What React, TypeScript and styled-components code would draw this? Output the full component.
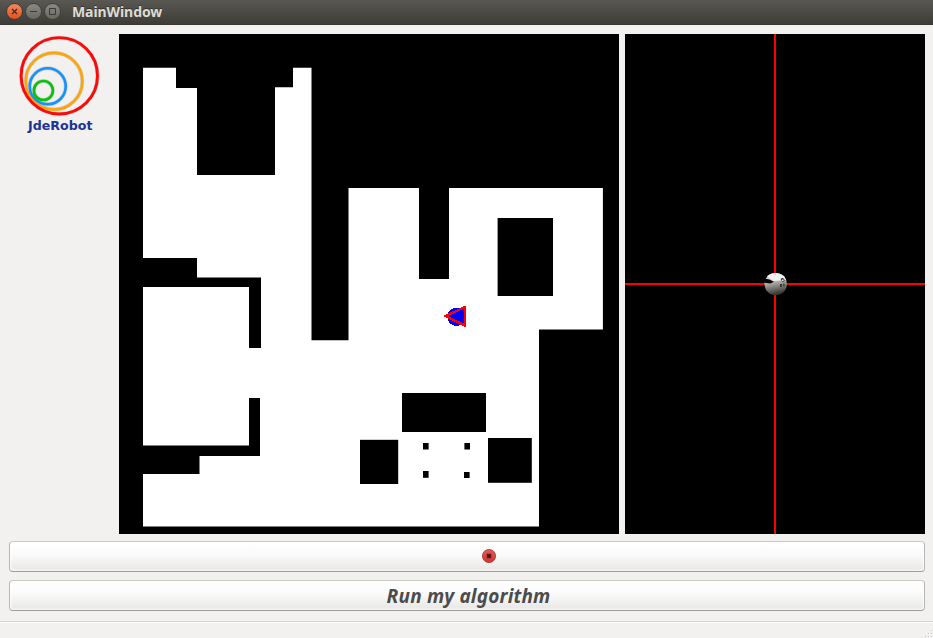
import React from "react";
import styled, { createGlobalStyle } from "styled-components";

const GlobalStyle = createGlobalStyle`
  * { box-sizing: border-box; }
  html, body { margin: 0; padding: 0; overflow: hidden; }
  body { background: #f2f1f0; }
`;

const Window = styled.div`
  display: flex;
  flex-direction: column;
  width: 933px;
  height: 638px;
  background: #f2f1f0;
  overflow: hidden;
`;

const TitleBar = styled.header`
  display: flex;
  align-items: center;
  height: 25px;
  flex: none;
  padding: 0 0 2px 6px;
  gap: 2px;
  background: linear-gradient(#5a5852, #3d3c37 96%, #33322e);
`;

const WindowButton = styled.span<{ $close?: boolean }>`
  display: flex;
  width: 17px;
  height: 17px;
  align-items: center;
  justify-content: center;
  border-radius: 50%;
  border: 1px solid ${(p) => (p.$close ? "#413832" : "#41403b")};
  background: ${(p) =>
    p.$close
      ? "linear-gradient(#f58a60, #e2501f)"
      : "linear-gradient(#8b8982, #6a6862)"};
`;

const Title = styled.h1`
  margin: 0 0 0 9px;
  font: 700 14px/22px "Noto Sans", "Open Sans", sans-serif;
  letter-spacing: -0.08px;
  color: #dfdbd2;
  text-shadow: 0 -1px 0 #35342f;
`;

const Views = styled.main`
  display: flex;
  height: 500px;
  flex: none;
  margin-top: 9px;
`;

const LogoPanel = styled.div`
  width: 119px;
  height: 106px;
`;

const MapView = styled.div`
  width: 500px;
  height: 500px;
  background: #000;
  margin-right: 6px;
`;

const CameraView = styled.div`
  width: 300px;
  height: 500px;
  background: #000;
`;

const Drawing = styled.svg`
  display: block;
`;

const Actions = styled.div`
  display: flex;
  flex-direction: column;
  gap: 8px;
  padding: 7px 8px 0 9px;
`;

const PushButton = styled.button`
  display: flex;
  align-items: center;
  justify-content: center;
  height: 31px;
  width: 100%;
  padding: 0;
  border: 1px solid #b8b6b3;
  border-top-color: #cccac7;
  border-bottom-color: #9e9c9a;
  border-radius: 4px;
  background: linear-gradient(#ffffff, #fafafa 45%, #ebeae9 90%, #efeeed);
  box-shadow: inset 1px 0 2px #ffffff, inset -1px 0 2px #ffffff;
`;

const RunLabel = styled.span`
  padding-left: 3px;
  font: italic 700 19px/28px "Noto Sans", "Open Sans", sans-serif;
  letter-spacing: 0.17px;
  color: #4c4c4c;
`;

const StatusBar = styled.footer`
  display: flex;
  justify-content: flex-end;
  align-items: flex-end;
  height: 17px;
  margin-top: 10px;
  border-top: 1px solid #d5d3d1;
  box-shadow: inset 0 1px 0 #ffffff;
`;

const FLOOR =
  "M143 67.7H176V88H197V175H275V87.2H293V67.7H311.5V340.2H348.5V188H419V278.9H449V188H602.9V329.4H539V526.6H143V474H199.5V456H260V398H249V445.6H143V287H249V348H261V277.6H197V258H143Z";

const FURNITURE = [
  [497.6, 218, 55.4, 78],
  [402, 393, 84, 39],
  [360, 439.8, 38.2, 44.2],
  [488, 438, 43.8, 44.8],
  [423, 443, 5.6, 6.5],
  [464.4, 443, 5.6, 6.5],
  [423, 471, 5.6, 6.8],
  [464, 472, 5.6, 6],
];

function Logo() {
  return (
    <Drawing width="119" height="106" viewBox="0 34 119 106" fill="none">
      <g stroke="#cfcecd" strokeWidth="3.9">
        <circle cx="59.3" cy="75.8" r="38.2" />
        <circle cx="54" cy="81.2" r="28.3" />
        <circle cx="47.7" cy="86.3" r="18" />
        <circle cx="43.4" cy="90.5" r="9.5" />
      </g>
      <g strokeWidth="2.6">
        <circle cx="54" cy="81.2" r="28.3" stroke="#ffa50a" />
        <circle cx="47.7" cy="86.3" r="18" stroke="#1493ff" />
        <circle cx="43.4" cy="90.5" r="9.5" stroke="#08c408" />
        <circle cx="59.3" cy="75.8" r="38.2" stroke="#ff0808" strokeWidth="2.9" />
      </g>
      <text
        x="28"
        y="130"
        fill="#1c3497"
        fontFamily="DejaVu Sans, sans-serif"
        fontWeight="700"
        fontSize="12.5"
        textLength="64.5"
        lengthAdjust="spacingAndGlyphs"
      >
        JdeRobot
      </text>
    </Drawing>
  );
}

function FloorPlan() {
  return (
    <Drawing width="500" height="500" viewBox="119 34 500 500">
      <path d={FLOOR} fill="#fff" />
      {FURNITURE.map(([x, y, w, h]) => (
        <rect key={`${x}-${y}`} x={x} y={y} width={w} height={h} />
      ))}
      <g shapeRendering="crispEdges">
        <circle cx="456.5" cy="316.8" r="9.2" fill="#00f" />
        <path
          d="M445.5 316L465 307V325.5Z"
          fill="#00f"
          stroke="#f00"
          strokeWidth="2.4"
          strokeLinejoin="round"
        />
      </g>
    </Drawing>
  );
}

function Crosshair() {
  return (
    <Drawing width="300" height="500" viewBox="625 34 300 500">
      <defs>
        <linearGradient id="ball" x1="0.4" y1="0" x2="0.6" y2="1">
          <stop offset="0" stopColor="#eeeeec" />
          <stop offset="0.3" stopColor="#c8c7c4" />
          <stop offset="0.6" stopColor="#85837e" />
          <stop offset="1" stopColor="#292725" />
        </linearGradient>
        <filter id="soft">
          <feGaussianBlur stdDeviation="0.4" />
        </filter>
      </defs>
      <path d="M774 34h2v500h-2zM625 283h300v2h-300z" fill="#f00" />
      <g filter="url(#soft)">
        <circle cx="775.7" cy="284.1" r="11.2" fill="url(#ball)" />
        <path d="M767 276q8-6 17 0l2 4-13 1z" fill="#f2f2f0" />
        <path d="M764.5 278.5l5 1 4.5 2.2-3.5 1.8-6.2-.8z" fill="#050505" />
        <path
          d="M780.5 279l2-1.3 1.8 1.2.4 2-2.2 1.2zM780 284h2v3h-2zm3.2-.5h1.3v3h-1.3z"
          fill="#383838"
        />
        <path d="M782 279.5h1.6v1.6H782z" fill="#ddd" />
      </g>
    </Drawing>
  );
}

function RecordIcon() {
  return (
    <Drawing width="16" height="16" viewBox="0 0 16 16" transform="translate(22 -1)">
      <defs>
        <linearGradient id="record" x2="0" y2="1">
          <stop stopColor="#e35b56" />
          <stop offset="1" stopColor="#d92e2c" />
        </linearGradient>
      </defs>
      <circle cx="8" cy="8" r="6.6" fill="url(#record)" stroke="#a44a46" strokeWidth="0.9" />
      <rect x="6" y="6" width="4" height="4" fill="#3b1917" stroke="#722725" strokeWidth="0.7" />
    </Drawing>
  );
}

function SizeGrip() {
  return (
    <Drawing width="9" height="9" viewBox="0 0 9 9">
      <path d="M7 1h1v1H7zM4 4h1v1H4zM7 4h1v1H7zM1 7h1v1H1zM4 7h1v1H4zM7 7h1v1H7z" fill="#c9c7c5" />
      <path d="M8 2h1v1H8zM5 5h1v1H5zM8 5h1v1H8zM2 8h1v1H2zM5 8h1v1H5zM8 8h1v1H8z" fill="#fff" />
    </Drawing>
  );
}

const GLYPHS = ["M5 5l5 5M10 5l-5 5", "M4 7.5h7", "M4.5 4.5h6v6h-6z"];

export default function App() {
  return (
    <Window>
      <GlobalStyle />
      <TitleBar>
        {GLYPHS.map((d, i) => (
          <WindowButton key={d} $close={i === 0}>
            <Drawing width="15" height="15" viewBox="0 0 15 15">
              <path
                d={d}
                fill="none"
                stroke={i === 0 ? "#4b2b1f" : "#3b3a36"}
                strokeWidth={i === 0 ? 1.4 : 1}
              />
            </Drawing>
          </WindowButton>
        ))}
        <Title>MainWindow</Title>
      </TitleBar>
      <Views>
        <LogoPanel>
          <Logo />
        </LogoPanel>
        <MapView>
          <FloorPlan />
        </MapView>
        <CameraView>
          <Crosshair />
        </CameraView>
      </Views>
      <Actions>
        <PushButton aria-label="Record">
          <RecordIcon />
        </PushButton>
        <PushButton>
          <RunLabel>Run my algorithm</RunLabel>
        </PushButton>
      </Actions>
      <StatusBar>
        <SizeGrip />
      </StatusBar>
    </Window>
  );
}
